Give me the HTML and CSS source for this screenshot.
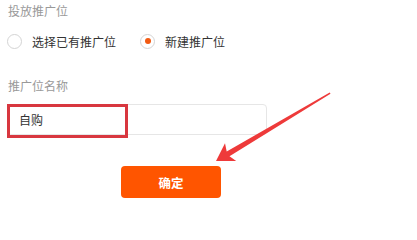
FILE: index.html
```html
<!DOCTYPE html>
<html lang="zh-CN">
<head>
<meta charset="utf-8">
<link rel="stylesheet" href="styles.css">
</head>
<body>
<div class="form">
  <div class="label">投放推广位</div>
  <div class="radios">
    <label class="radio"><span class="dot"></span><span class="rtext">选择已有推广位</span></label>
    <label class="radio checked"><span class="dot"></span><span class="rtext">新建推广位</span></label>
  </div>
  <div class="label label2">推广位名称</div>
  <div class="input-wrap">
    <div class="input">自购</div>
    <div class="highlight"></div>
  </div>
  <button class="btn">确定</button>
</div>
<svg class="arrow" width="417" height="211" viewBox="0 0 417 211">
  <polygon fill="#ee3a3a" points="216,161 225,143.3 226.7,151.4 329.7,92.6 330.5,93.8 229.5,156.3 236.2,160.9"/>
</svg>
</body>
</html>
```

FILE: styles.css
```css
html, body {
  margin: 0;
  padding: 0;
  background: #fff;
}
body {
  width: 417px;
  height: 211px;
  overflow: hidden;
  position: relative;
  font-family: "Noto Sans CJK SC", "Noto Sans", sans-serif;
  font-size: 12px;
  color: #333;
}
.form {
  padding-left: 7px;
}
.label {
  color: #999;
  line-height: 20px;
  height: 20px;
  padding-left: 1px;
  padding-top: 1px;
}
.radios {
  display: flex;
  align-items: center;
  height: 16px;
  margin-top: 12px;
}
.radio {
  display: flex;
  align-items: center;
}
.radio + .radio {
  margin-left: 24px;
}
.dot {
  width: 15px;
  height: 15px;
  box-sizing: border-box;
  border: 1px solid #d4d4d4;
  border-radius: 50%;
  display: flex;
  align-items: center;
  justify-content: center;
}
.checked .dot::after {
  content: "";
  width: 6px;
  height: 6px;
  border-radius: 50%;
  background: #f25a12;
}
.rtext {
  margin-left: 10px;
  font-size: 12px;
  color: #333;
}
.label2 {
  margin-top: 26px;
}
.input-wrap {
  position: relative;
  margin-top: 8px;
  width: 260px;
}
.input {
  height: 31px;
  box-sizing: border-box;
  border: 1px solid #e6e6e6;
  border-radius: 4px;
  padding-left: 11px;
  line-height: 29px;
  font-size: 12px;
  color: #333;
}
.highlight {
  position: absolute;
  left: 0;
  top: 0;
  width: 121px;
  height: 34px;
  box-sizing: border-box;
  border: 3px solid #d8373f;
}
.btn {
  display: block;
  margin-top: 31px;
  margin-left: 114px;
  width: 100px;
  height: 32px;
  border: none;
  border-radius: 4px;
  background: #ff5500;
  color: #fff;
  font-family: "Noto Sans CJK SC", "Noto Sans", sans-serif;
  font-size: 12.5px;
  font-weight: bold;
  padding: 0;
}
.arrow {
  position: absolute;
  left: 0;
  top: 0;
  pointer-events: none;
}
```
